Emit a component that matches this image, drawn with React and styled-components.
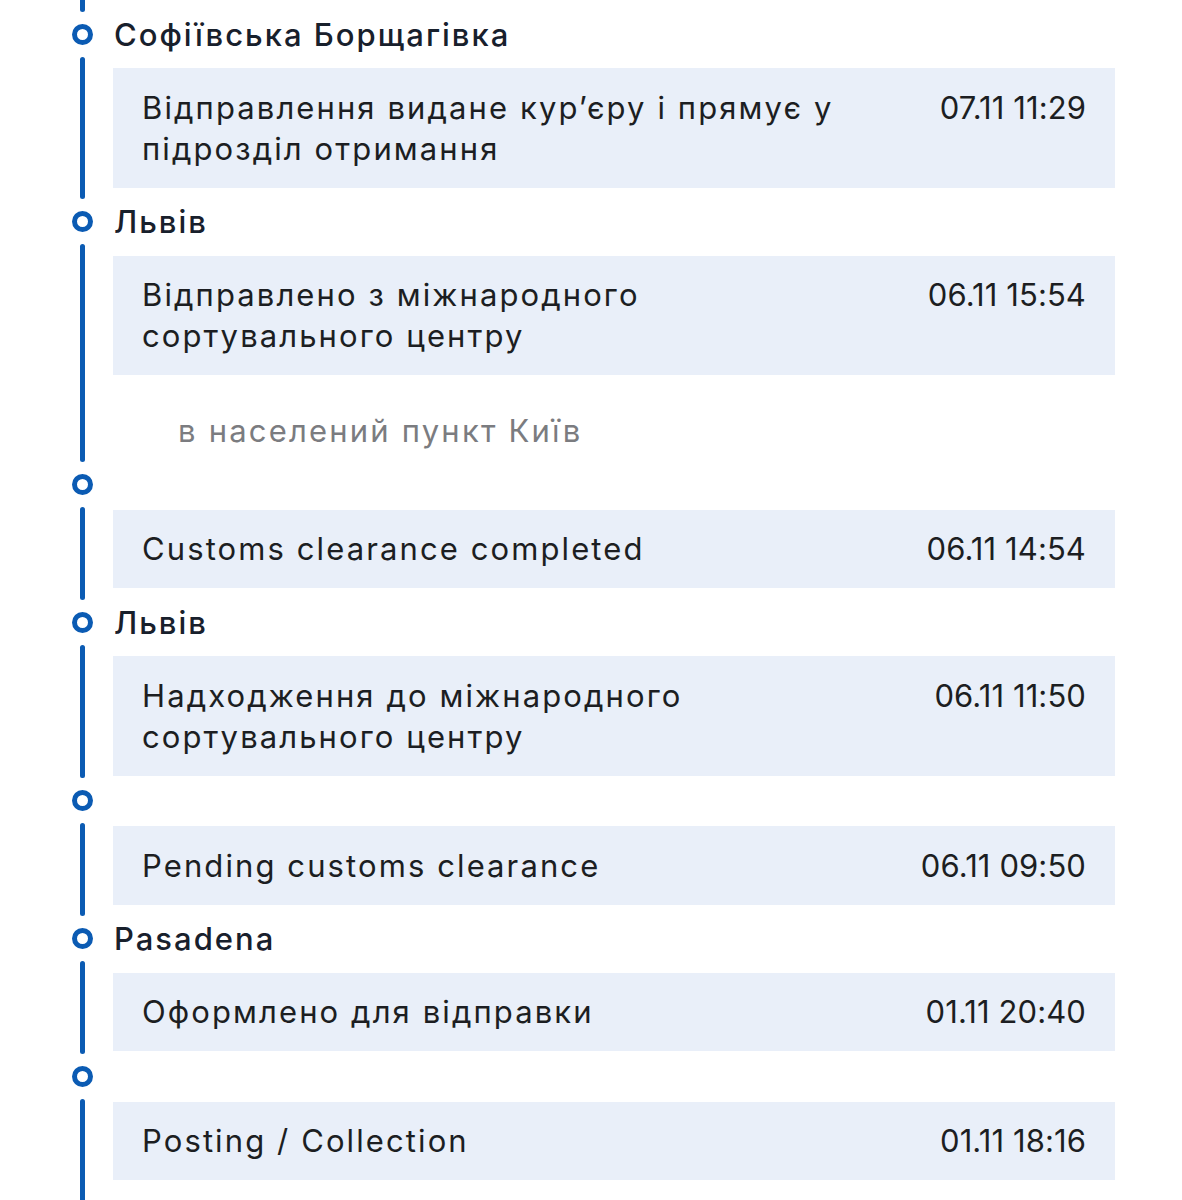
import React from "react";
import styled, { createGlobalStyle } from "styled-components";

const BLUE = "#0b5bb3";

const GlobalStyle = createGlobalStyle`
  html, body { margin: 0; padding: 0; background: #ffffff; }
  body { font-family: "Inter", "Noto Sans", sans-serif; -webkit-font-smoothing: antialiased; }
`;

const Page = styled.div`
  height: 1200px;
  overflow: hidden;
  box-sizing: border-box;
  padding: 0 67px 0 51px;
  background: #fff;
`;

const Entry = styled.section`
  display: grid;
  grid-template-columns: 62px 1fr;
  grid-template-rows: ${(p) => (p.$titled ? "68px" : "50.5px")} auto;
`;

const Rail = styled.div`
  grid-column: 1;
  grid-row: 1 / span 2;
  display: flex;
  flex-direction: column;
  align-items: center;
`;

const Stub = styled.div`
  width: 5px;
  flex: none;
  height: ${(p) => (p.$titled ? "11.5px" : "2.75px")};
  margin-bottom: 12px;
  background: ${BLUE};
  border-radius: 0 0 3px 3px;
`;

const Dot = styled.div`
  flex: none;
  box-sizing: border-box;
  width: 21px;
  height: 21px;
  border-radius: 50%;
  border: 5.5px solid ${BLUE};
  background: #fff;
`;

const Line = styled.div`
  flex: 1;
  width: 5px;
  margin-top: 12px;
  background: ${BLUE};
  border-radius: 3px 3px 0 0;
`;

const Title = styled.h3`
  grid-column: 2;
  grid-row: 1;
  margin: 0 0 0 1px;
  display: flex;
  align-items: center;
  font-size: 31px;
  font-weight: 500;
  letter-spacing: 2px;
  color: #18202c;
`;

const Body = styled.div`
  grid-column: 2;
  grid-row: 2;
  padding-bottom: ${(p) => (p.$continues ? "40px" : "0")};
`;

const Card = styled.div`
  display: flex;
  justify-content: space-between;
  align-items: flex-start;
  background: #e9eff9;
  padding: 18.75px 29px;
  font-size: 31px;
  line-height: 41px;
  letter-spacing: 2.1px;
  color: #1c1e22;
`;

const Message = styled.div`
  max-width: 740px;
`;

const Time = styled.div`
  flex: none;
  margin-left: 24px;
  letter-spacing: 0.1px;
  white-space: nowrap;
`;

const Note = styled.div`
  padding: 36px 0 8px 65px;
  font-size: 31px;
  line-height: 40px;
  letter-spacing: 2.2px;
  color: #7b7c80;
`;

const events = [
  { place: "Софіївська Борщагівка", text: "Відправлення видане кур’єру і прямує у підрозділ отримання", time: "07.11 11:29" },
  { place: "Львів", text: "Відправлено з міжнародного сортувального центру", time: "06.11 15:54", note: "в населений пункт Київ" },
  { text: "Customs clearance completed", time: "06.11 14:54" },
  { place: "Львів", text: "Надходження до міжнародного сортувального центру", time: "06.11 11:50" },
  { text: "Pending customs clearance", time: "06.11 09:50" },
  { place: "Pasadena", text: "Оформлено для відправки", time: "01.11 20:40" },
  { text: "Posting / Collection", time: "01.11 18:16" },
];

export default function App() {
  return (
    <>
      <GlobalStyle />
      <Page>
        {events.map((e, i) => {
          const titled = Boolean(e.place);
          return (
            <Entry key={i} $titled={titled}>
              <Rail>
                <Stub $titled={titled} />
                <Dot />
                <Line />
              </Rail>
              {titled && <Title>{e.place}</Title>}
              <Body $continues={i === events.length - 1}>
                <Card>
                  <Message>{e.text}</Message>
                  <Time>{e.time}</Time>
                </Card>
                {e.note && <Note>{e.note}</Note>}
              </Body>
            </Entry>
          );
        })}
      </Page>
    </>
  );
}
